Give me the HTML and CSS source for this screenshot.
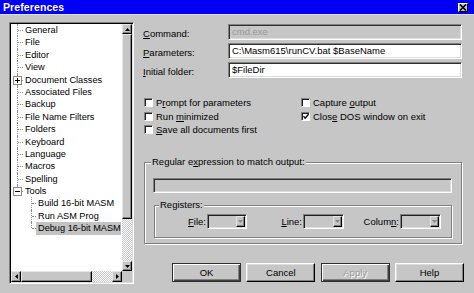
FILE: index.html
```html
<!DOCTYPE html>
<html>
<head>
<meta charset="utf-8">
<link rel="stylesheet" href="styles.css">
</head>
<body>
<div class="window">
  <div class="titlebar">
    <span class="title">Preferences</span>
    <span class="close"><svg width="8" height="7" viewBox="0 0 8 7"><path d="M1 0.5 L7 6.5 M7 0.5 L1 6.5" stroke="#000" stroke-width="1.6" fill="none"/></svg></span>
  </div>
  <div class="content">
    <div class="tree">
      <div class="tree-top">
        <div class="tree-list">
          <ul class="root">
            <li><span class="label">General</span></li>
            <li><span class="label">File</span></li>
            <li><span class="label">Editor</span></li>
            <li><span class="label">View</span></li>
            <li><span class="exp plus"></span><span class="label">Document Classes</span></li>
            <li><span class="label">Associated Files</span></li>
            <li><span class="label">Backup</span></li>
            <li><span class="label">File Name Filters</span></li>
            <li><span class="label">Folders</span></li>
            <li><span class="label">Keyboard</span></li>
            <li><span class="label">Language</span></li>
            <li><span class="label">Macros</span></li>
            <li><span class="label">Spelling</span></li>
            <li class="last"><span class="exp minus"></span><span class="label">Tools</span>
              <ul class="children">
                <li><span class="label">Build 16-bit MASM</span></li>
                <li><span class="label">Run ASM Prog</span></li>
                <li class="last"><span class="label sel">Debug 16-bit MASM</span></li>
              </ul>
            </li>
          </ul>
        </div>
        <div class="vscroll">
          <span class="sbtn"><svg width="5" height="3" viewBox="0 0 5 3"><path d="M2.5 0 L5 3 L0 3 Z" fill="#000"/></svg></span>
          <span class="vthumb"></span>
          <span class="vtrack"></span>
          <span class="sbtn"><svg width="5" height="3" viewBox="0 0 5 3"><path d="M0 0 L5 0 L2.5 3 Z" fill="#000"/></svg></span>
        </div>
      </div>
      <div class="hscroll">
        <span class="sbtn h"><svg width="3" height="5" viewBox="0 0 3 5"><path d="M0 2.5 L3 0 L3 5 Z" fill="#000"/></svg></span>
        <span class="hthumb"></span>
        <span class="htrack"></span>
        <span class="sbtn h"><svg width="3" height="5" viewBox="0 0 3 5"><path d="M0 0 L3 2.5 L0 5 Z" fill="#000"/></svg></span>
        <span class="corner"></span>
      </div>
    </div>

    <div class="main">
      <div class="fields">
        <span class="flabel"><u>C</u>ommand:</span>
        <span class="field disabled">cmd.exe</span>
        <span class="flabel"><u>P</u>arameters:</span>
        <span class="field">C:\Masm615\runCV.bat $BaseName</span>
        <span class="flabel"><u>I</u>nitial folder:</span>
        <span class="field">$FileDir</span>
      </div>

      <div class="checks">
        <span class="check"><span class="box"></span><span>P<u>r</u>ompt for parameters</span></span>
        <span class="check"><span class="box"></span><span>Capture <u>o</u>utput</span></span>
        <span class="check"><span class="box"></span><span>Run <u>m</u>inimized</span></span>
        <span class="check"><span class="box"><svg width="7" height="7" viewBox="0 0 7 7"><path d="M0.5 3 L2.5 5.5 L6.5 0.8" stroke="#000" stroke-width="1.5" fill="none"/></svg></span><span>Clos<u>e</u> DOS window on exit</span></span>
        <span class="check"><span class="box"></span><span><u>S</u>ave all documents first</span></span>
      </div>

      <div class="group">
        <span class="legend">Regular e<u>x</u>pression to match output:</span>
        <span class="field disabled regex"></span>
        <div class="subgroup">
          <span class="legend">Registers:</span>
          <div class="reg-row">
            <span class="rlabel file"><u>F</u>ile:</span>
            <span class="combo"><span class="cbtn"><svg width="5" height="3" viewBox="0 0 5 3"><path d="M0 0 L5 0 L2.5 3 Z" fill="#888"/></svg></span></span>
            <span class="rlabel line"><u>L</u>ine:</span>
            <span class="combo w41"><span class="cbtn"><svg width="5" height="3" viewBox="0 0 5 3"><path d="M0 0 L5 0 L2.5 3 Z" fill="#888"/></svg></span></span>
            <span class="rlabel col">Colum<u>n</u>:</span>
            <span class="combo w41"><span class="cbtn"><svg width="5" height="3" viewBox="0 0 5 3"><path d="M0 0 L5 0 L2.5 3 Z" fill="#888"/></svg></span></span>
          </div>
        </div>
      </div>

      <div class="buttons">
        <span class="btn default">OK</span>
        <span class="btn">Cancel</span>
        <span class="btn default dis">Apply</span>
        <span class="btn">Help</span>
      </div>
    </div>
  </div>
</div>
</body>
</html>
```
FILE: styles.css
```css
* { box-sizing: border-box; }
html, body { margin: 0; padding: 0; }
body {
  font-family: "Liberation Sans", Arial, sans-serif;
  font-size: 9.5px;
  color: #000;
  background: #c6c6c6;
}
.window {
  width: 474px;
  height: 293px;
  background: #c6c6c6;
  display: flex;
  flex-direction: column;
  overflow: hidden;
}
.titlebar {
  height: 15px;
  background: #0000f6;
  display: flex;
  align-items: center;
  justify-content: space-between;
  padding: 0 6px 0 3px;
  border-bottom: 1px solid #e0e0e0;
}
.title {
  color: #fff;
  font-weight: bold;
  font-size: 10.5px;
  letter-spacing: 0.1px;
}
.close {
  width: 10px;
  height: 9px;
  background: #c6c6c6;
  border: 1px solid;
  border-color: #fff #000 #000 #fff;
  display: flex;
  align-items: center;
  justify-content: center;
}
.content {
  display: flex;
  padding: 7px 0 0 9px;
}

/* tree */
.tree {
  width: 125px;
  height: 262px;
  border: 1px solid;
  border-color: #808080 #fff #fff #808080;
  box-shadow: inset 1px 1px 0 #000, inset -1px -1px 0 #dcdcdc;
  padding: 1px;
  background: #fff;
  display: flex;
  flex-direction: column;
}
.tree-top {
  display: flex;
  flex: 1;
  min-height: 0;
}
.tree-list {
  flex: 1;
  overflow: hidden;
  font-size: 9.2px;
}
ul { list-style: none; margin: 0; padding: 0; }
li { position: relative; padding-left: 14px; }
.children li { padding-left: 13px; }
li::before {
  content: "";
  position: absolute;
  left: 6px;
  top: 0;
  height: 100%;
  border-left: 1px dotted #8a8a8a;
}
li.last::before { height: 6px; }
li::after {
  content: "";
  position: absolute;
  left: 7px;
  top: 6px;
  width: 5px;
  border-top: 1px dotted #8a8a8a;
}
.children li::after { width: 4px; }
.label {
  display: block;
  height: 12.4px;
  line-height: 12.4px;
  white-space: nowrap;
}
.children .label {
  margin-left: -2px;
  padding-left: 2px;
  margin-right: 1px;
}
.label.sel { background: #c3c3c3; }
.exp {
  position: absolute;
  left: 2px;
  top: 2px;
  width: 9px;
  height: 9px;
  border: 1px solid #8a8a8a;
  background-color: #fff;
  background-image: linear-gradient(#000, #000);
  background-position: center;
  background-size: 5px 1px;
  background-repeat: no-repeat;
  z-index: 1;
}
.exp.plus {
  background-image: linear-gradient(#000, #000), linear-gradient(#000, #000);
  background-size: 5px 1px, 1px 5px;
  background-position: center, center;
}

.vscroll {
  width: 10px;
  display: flex;
  flex-direction: column;
  background: #c6c6c6;
}
.sbtn {
  width: 10px;
  height: 10px;
  flex: none;
  background: #c6c6c6;
  border: 1px solid;
  border-color: #e6e6e6 #000 #000 #e6e6e6;
  box-shadow: inset -1px -1px 0 #808080;
  display: flex;
  align-items: center;
  justify-content: center;
}
.vthumb {
  height: 185px;
  flex: none;
  background: #c6c6c6;
  border: 1px solid;
  border-color: #e6e6e6 #000 #000 #e6e6e6;
  box-shadow: inset -1px -1px 0 #808080;
}
.vtrack, .htrack {
  flex: 1;
  background: repeating-conic-gradient(#fff 0 25%, #c6c6c6 0 50%) 0 0 / 2px 2px;
}
.hscroll {
  height: 11px;
  display: flex;
  background: #c6c6c6;
}
.sbtn.h { height: 11px; }
.hthumb {
  width: 71px;
  flex: none;
  border: 1px solid;
  border-color: #e6e6e6 #000 #000 #e6e6e6;
  box-shadow: inset -1px -1px 0 #808080;
  background: #c6c6c6;
}
.corner { width: 10px; flex: none; background: #c6c6c6; }

/* right side */
.main {
  margin-left: 9px;
  width: 322px;
  display: flex;
  flex-direction: column;
  padding-top: 2px;
}
.fields {
  display: grid;
  grid-template-columns: 85px 234px;
  row-gap: 3px;
  align-items: center;
}
.flabel { white-space: nowrap; padding-top: 2px; }
.field {
  height: 16px;
  background: #fff;
  border: 1px solid;
  border-color: #808080 #fff #fff #808080;
  box-shadow: inset 1px 1px 0 #303030, inset -1px -1px 0 #dcdcdc;
  padding: 0 3px;
  line-height: 14px;
  white-space: nowrap;
  overflow: hidden;
}
.field.disabled { background: #c6c6c6; color: #9a9a9a; }

.checks {
  margin-top: 18px;
  margin-left: 1px;
  display: grid;
  grid-template-columns: 157px auto;
  grid-auto-rows: 13.5px;
}
.check {
  display: flex;
  align-items: center;
  gap: 3px;
  white-space: nowrap;
}
.box {
  width: 9px;
  height: 9px;
  flex: none;
  background: #fff;
  border: 1px solid;
  border-color: #808080 #fff #fff #808080;
  box-shadow: inset 1px 1px 0 #202020;
  display: flex;
  align-items: center;
  justify-content: center;
}
.box svg { margin: 1px 0 0 1px; }

.group {
  margin-top: 25px;
  margin-left: 1px;
  width: 318px;
  height: 82px;
  border: 1px solid #808080;
  box-shadow: 1px 1px 0 #fff, inset 1px 1px 0 #fff;
  padding: 0 9px 0 8px;
  display: flex;
  flex-direction: column;
}
.legend {
  align-self: flex-start;
  margin: -7px 0 0 -2px;
  padding: 0 1px;
  background: #c6c6c6;
  height: 12px;
  line-height: 12px;
  white-space: nowrap;
}
.regex { margin-top: 10px; height: 15px; flex: none; }
.subgroup {
  margin-top: 12px;
  margin-left: 1px;
  width: 298px;
  height: 33px;
  border: 1px solid #808080;
  box-shadow: 1px 1px 0 #fff, inset 1px 1px 0 #fff;
  padding: 0 6px;
  display: flex;
  flex-direction: column;
}
.reg-row {
  display: flex;
  align-items: center;
  margin-top: 3px;
}
.rlabel { text-align: right; white-space: nowrap; padding-right: 1px; }
.rlabel.file { width: 46px; }
.rlabel.line { width: 56px; }
.rlabel.col { width: 56px; }
.combo {
  width: 40px;
  height: 15px;
  flex: none;
  background: #c6c6c6;
  border: 1px solid;
  border-color: #808080 #fff #fff #808080;
  box-shadow: inset 1px 1px 0 #202020, inset -1px -1px 0 #dcdcdc;
  display: flex;
  justify-content: flex-end;
  padding: 1px;
}
.combo.w41 { width: 41px; }
.cbtn {
  width: 9px;
  height: 11px;
  background: #c6c6c6;
  border: 1px solid;
  border-color: #e6e6e6 #000 #000 #e6e6e6;
  box-shadow: inset -1px -1px 0 #808080;
  display: flex;
  align-items: center;
  justify-content: center;
}

.buttons {
  margin-top: 19px;
  margin-left: 29px;
  width: 292px;
  display: flex;
  justify-content: space-between;
}
.btn {
  width: 69px;
  height: 19px;
  background: #c6c6c6;
  border: 1px solid;
  border-color: #fff #000 #000 #fff;
  box-shadow: inset -1px -1px 0 #808080, inset 1px 1px 0 #dcdcdc;
  display: flex;
  align-items: center;
  justify-content: center;
}
.btn.default {
  border-color: #303030;
  box-shadow: inset 1px 1px 0 #fff, inset -1px -1px 0 #404040, inset -2px -2px 0 #808080;
}
.btn.dis { color: #9a9a9a; text-shadow: 1px 1px 0 #fff; }
```
